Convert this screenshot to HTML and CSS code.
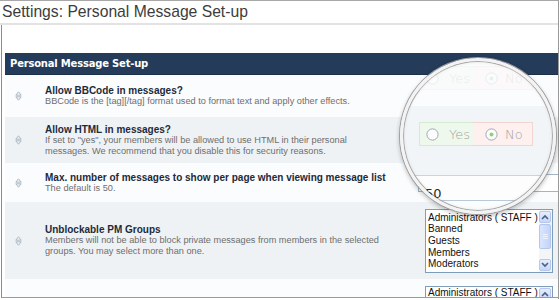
FILE: index.html
```html
<!DOCTYPE html>
<html>
<head>
<meta charset="utf-8">
<title>Settings: Personal Message Set-up</title>
<link rel="stylesheet" href="styles.css">
</head>
<body>
<div class="page">
  <div class="titlebar"><h1 class="title">Settings: Personal Message Set-up</h1></div>
  <div class="panel">
    <div class="section-head">Personal Message Set-up</div>

    <div class="row r1">
      <span class="handle"><svg width="7" height="10" viewBox="0 0 7 10"><path d="M3.5 0.8 L6.2 4.2 H0.8 Z M0.8 5.8 H6.2 L3.5 9.2 Z" fill="#eef1f4" stroke="#a9b3be" stroke-width="0.9"/></svg></span>
      <div class="text">
        <div class="label">Allow BBCode in messages?</div>
        <div class="desc">BBCode is the [tag][/tag] format used to format text and apply other effects.</div>
      </div>
      <div class="control"></div>
    </div>

    <div class="row r2 alt">
      <span class="handle"><svg width="7" height="10" viewBox="0 0 7 10"><path d="M3.5 0.8 L6.2 4.2 H0.8 Z M0.8 5.8 H6.2 L3.5 9.2 Z" fill="#eef1f4" stroke="#a9b3be" stroke-width="0.9"/></svg></span>
      <div class="text">
        <div class="label">Allow HTML in messages?</div>
        <div class="desc">If set to "yes", your members will be allowed to use HTML in their personal<br>messages. We recommend that you disable this for security reasons.</div>
      </div>
      <div class="control"></div>
    </div>

    <div class="row r3">
      <span class="handle"><svg width="7" height="10" viewBox="0 0 7 10"><path d="M3.5 0.8 L6.2 4.2 H0.8 Z M0.8 5.8 H6.2 L3.5 9.2 Z" fill="#eef1f4" stroke="#a9b3be" stroke-width="0.9"/></svg></span>
      <div class="text">
        <div class="label">Max. number of messages to show per page when viewing message list</div>
        <div class="desc">The default is 50.</div>
      </div>
      <div class="control"><div class="textinput"></div></div>
    </div>

    <div class="row r4 alt">
      <span class="handle"><svg width="7" height="10" viewBox="0 0 7 10"><path d="M3.5 0.8 L6.2 4.2 H0.8 Z M0.8 5.8 H6.2 L3.5 9.2 Z" fill="#eef1f4" stroke="#a9b3be" stroke-width="0.9"/></svg></span>
      <div class="text">
        <div class="label">Unblockable PM Groups</div>
        <div class="desc">Members will not be able to block private messages from members in the selected<br>groups. You may select more than one.</div>
      </div>
      <div class="control">
        <div class="listbox">
          <div class="options">
            <div>Administrators ( STAFF )</div>
            <div>Banned</div>
            <div>Guests</div>
            <div>Members</div>
            <div>Moderators</div>
          </div>
          <div class="scroll">
            <div class="sbtn"><svg width="8" height="6" viewBox="0 0 8 6"><path d="M1 5 L4 2 L7 5" fill="none" stroke="#4a5f86" stroke-width="1.6"/></svg></div>
            <div class="track"><div class="thumb"><span></span><span></span><span></span></div></div>
            <div class="sbtn"><svg width="8" height="6" viewBox="0 0 8 6"><path d="M1 1 L4 4 L7 1" fill="none" stroke="#4a5f86" stroke-width="1.6"/></svg></div>
          </div>
        </div>
      </div>
    </div>

    <div class="row r5">
      <span></span>
      <div class="text"></div>
      <div class="control">
        <div class="listbox short">
          <div class="options">
            <div>Administrators ( STAFF )</div>
          </div>
          <div class="scroll">
            <div class="sbtn"><svg width="8" height="6" viewBox="0 0 8 6"><path d="M1 5 L4 2 L7 5" fill="none" stroke="#4a5f86" stroke-width="1.6"/></svg></div>
          </div>
        </div>
      </div>
    </div>
  </div>

  <div class="lens">
    <div class="yn ghost">
      <div class="yn-opt yes"><svg width="13" height="13" viewBox="0 0 13 13"><circle cx="6.5" cy="6.5" r="5.6" fill="#fff" stroke="#9ea8b6"/></svg><span>Yes</span></div>
      <div class="yn-opt no"><svg width="13" height="13" viewBox="0 0 13 13"><circle cx="6.5" cy="6.5" r="5.6" fill="#fff" stroke="#9ea8b6"/><circle cx="6.5" cy="6.5" r="2" fill="#86d47f"/></svg><span>No</span></div>
    </div>
    <div class="yn main">
      <div class="yn-opt yes"><svg width="13" height="13" viewBox="0 0 13 13"><circle cx="6.5" cy="6.5" r="5.6" fill="#fdfdfd" stroke="#9ea8b6"/></svg><span>Yes</span></div>
      <div class="yn-opt no"><svg width="13" height="13" viewBox="0 0 13 13"><circle cx="6.5" cy="6.5" r="5.6" fill="#fdfdfd" stroke="#9ea8b6"/><circle cx="6.5" cy="6.5" r="2" fill="#86d47f"/></svg><span>No</span></div>
    </div>
    <div class="lens-value">50</div>
  </div>
</div>
</body>
</html>
```

FILE: styles.css
```css
* { box-sizing: border-box; margin: 0; padding: 0; }
html, body { background: #fff; }
body {
  width: 560px;
  height: 300px;
  overflow: hidden;
  font-family: "Liberation Sans", Arial, sans-serif;
}
.page {
  position: relative;
  width: 559px;
  height: 299px;
  border-right: 1px solid #9a9a9a;
}
.titlebar {
  height: 25px;
  border-top: 1px solid #a8a8a8;
  border-bottom: 2px solid #e3e3e3;
  padding-left: 2px;
}
.title {
  font-weight: normal;
  font-size: 15.7px;
  line-height: 22px;
  color: #3c3c3c;
}
.panel {
  height: 273px;
  margin-left: 1px;
  border-left: 1px solid #8c8c8c;
  border-bottom: 1px solid #9a9a9a;
  padding: 28px 0 0 3px;
  overflow: hidden;
}
.section-head {
  height: 22px;
  background: #243b59;
  border-bottom: 1px solid #1b2f49;
  color: #fff;
  font-family: "DejaVu Sans", Verdana, sans-serif;
  font-weight: bold;
  font-size: 10px;
  letter-spacing: -0.2px;
  line-height: 22px;
  padding-left: 5px;
}
.row {
  display: grid;
  grid-template-columns: 40px 375px 1fr;
  align-items: center;
  background: #fbfcfd;
}
.row.alt { background: #eef2f5; }
.r1 { height: 42px; }
.r2 { height: 46px; }
.r3 { height: 39px; }
.r4 { height: 77px; }
.r5 { height: 20px; align-items: start; }
.handle {
  display: flex;
  margin-left: 10px;
}
.label {
  font-weight: bold;
  font-size: 10px;
  line-height: 11px;
  color: #1d2a3a;
}
.desc {
  font-size: 9.2px;
  line-height: 11px;
  color: #6e6e6e;
}
.textinput {
  height: 18px;
  margin-left: -2px;
  border: 1px solid #a2b5c8;
  border-right: none;
  background: #fff;
}
.listbox {
  margin-left: 5px;
  width: 128px;
  height: 64px;
  border: 1px solid #7f9db9;
  background: #fff;
  display: flex;
}
.listbox.short { margin-top: 7px; height: 20px; }
.options {
  flex: 1;
  padding: 2px 0 0 2px;
  font-size: 10px;
  line-height: 11.7px;
  color: #111;
  white-space: nowrap;
}
.short .options { padding-top: 1px; line-height: 10px; }
.scroll {
  width: 13px;
  display: flex;
  flex-direction: column;
  background: #f4f5f7;
  padding: 1px 1px 1px 0;
}
.sbtn {
  height: 12px;
  background: linear-gradient(#e6eefd, #c6d6fa);
  border: 1px solid #b6c8ee;
  border-radius: 2px;
  display: flex;
  align-items: center;
  justify-content: center;
}
.track {
  flex: 1;
  padding-top: 1px;
}
.thumb {
  height: 25px;
  background: linear-gradient(to right, #dbe6fc, #c3d4fa);
  border: 1px solid #b3c6ee;
  border-radius: 2px;
  display: flex;
  flex-direction: column;
  align-items: center;
  justify-content: center;
  gap: 1px;
}
.thumb span {
  width: 5px;
  height: 1px;
  background: #eef3ff;
}
.lens {
  position: absolute;
  left: 400px;
  top: 58px;
  width: 156px;
  height: 156px;
  border-radius: 50%;
  border: 3px solid #f3f3f3;
  box-shadow: 0 0 0 1px #9d9d9d, 0 2px 4px 1px rgba(0,0,0,0.22), inset 0 0 0 1px #a8a8a8, inset 0 0 4px rgba(0,0,0,0.12);
  background: linear-gradient(to bottom, #fbfcfd 0, #fbfcfd 45px, #f2f5f7 45px, #f2f5f7 114px, #c8d5e1 114px, #c8d5e1 115px, #fdfdfd 115px, #fdfdfd 139px, #b9c9d8 139px, #b9c9d8 140px, #fbfcfd 140px);
  overflow: hidden;
  padding-left: 16px;
}
.yn {
  display: flex;
  width: 114px;
  height: 24px;
}
.yn.ghost { margin-top: 5px; opacity: 0.2; }
.yn.main { margin-top: 32px; }
.yn-opt {
  flex: 1;
  display: flex;
  align-items: center;
  font-family: "DejaVu Sans", Verdana, sans-serif;
  font-weight: 200;
  font-size: 13px;
  color: #a3a3a3;
}
.yes {
  background: #eef8ec;
  border: 1px solid #d5ebd1;
  border-right: none;
  padding-left: 6px;
  gap: 10px;
}
.no {
  background: #fdf0ef;
  border: 1px solid #f2d5d3;
  border-left: none;
  padding-left: 12px;
  gap: 7px;
}
.lens-value {
  margin: 40px 0 0 6px;
  font-family: "DejaVu Sans", Verdana, sans-serif;
  font-size: 13px;
  line-height: 15px;
  color: #2a2a2a;
}
```
